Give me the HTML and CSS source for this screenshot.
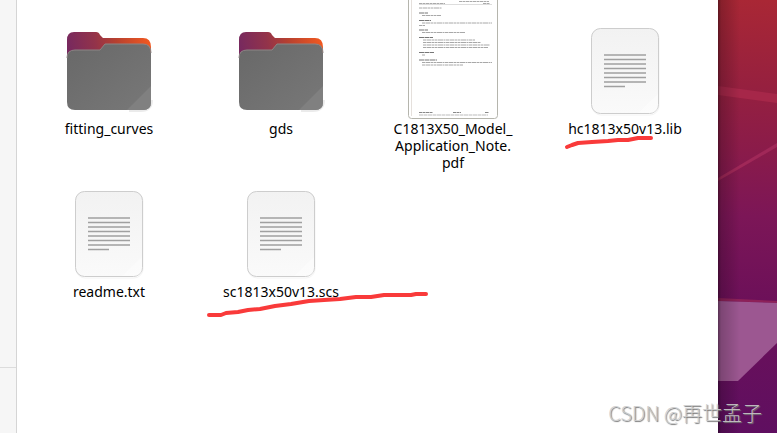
FILE: index.html
```html
<!DOCTYPE html>
<html lang="zh-CN">
<head>
    <meta charset="UTF-8">
    <meta name="viewport" content="width=device-width, initial-scale=1.0">
    <title>Files</title>
    <link rel="stylesheet" href="styles.css">
</head>
<body>
    <!-- shared icons -->
    <svg class="defs" width="0" height="0" aria-hidden="true">
        <defs>
            <linearGradient id="folderBack" gradientUnits="userSpaceOnUse" x1="6" y1="30" x2="90" y2="14">
                <stop offset="0" stop-color="#752860"/>
                <stop offset="0.35" stop-color="#93334a"/>
                <stop offset="0.6" stop-color="#b8412f"/>
                <stop offset="1" stop-color="#f45a20"/>
            </linearGradient>
            <linearGradient id="folderFront" x1="0" y1="0" x2="1" y2="1">
                <stop offset="0" stop-color="#686868"/>
                <stop offset="1" stop-color="#787878"/>
            </linearGradient>
            <linearGradient id="paper" x1="0" y1="0" x2="0" y2="1">
                <stop offset="0" stop-color="#f2f2f2"/>
                <stop offset="1" stop-color="#fafafa"/>
            </linearGradient>
            <linearGradient id="wall" gradientUnits="userSpaceOnUse" x1="35" y1="0" x2="25" y2="433">
                <stop offset="0" stop-color="#a92735"/>
                <stop offset="0.2" stop-color="#96203f"/>
                <stop offset="0.35" stop-color="#8a1b4a"/>
                <stop offset="0.5" stop-color="#7c1657"/>
                <stop offset="0.7" stop-color="#6c1059"/>
                <stop offset="1" stop-color="#5f0f60"/>
            </linearGradient>
            <symbol id="folder" viewBox="0 0 96 96">
                <path d="M68 87h12q11 0 11-11" fill="none" stroke="#000" stroke-opacity="0.08" stroke-width="2"/>
                <path d="M6 36V16q0-8 7-8h22q3 0 4 3l3 3h40q8 0 8 9v18z" fill="url(#folderBack)"/>
                <path d="M6 34q0-8 8-8h25l5-6h38q8 0 8 9v49q0 8-8 8H14q-8 0-8-8z" fill="url(#folderFront)"/>
                <path d="M6 34q0-8 8-8h25l5-6h38q8 0 8 9" fill="none" stroke="#8d8585" stroke-width="1"/>
                <path d="M90 62v16q0 8-8 8H66z" fill="#808080"/>
            </symbol>
            <symbol id="document" viewBox="0 0 96 96">
                <rect x="15" y="5" width="67" height="86" rx="9" fill="none" stroke="#f4f4f4"/>
                <rect x="14.5" y="4.5" width="67" height="85" rx="9" fill="url(#paper)" stroke="#cdcdcd"/>
                <path d="M81 70v12q0 7-8 7H61z" fill="#fff" opacity="0.4"/>
                <path d="M27 31h42M27 35.5h42M27 40h42M27 44.5h42M27 49h42M27 53.5h42M27 58h42M27 62.5h21" stroke="#a0a0a0" stroke-width="1.5"/>
            </symbol>
        </defs>
    </svg>

    <div class="desktop">
        <div class="window">
            <aside class="sidebar">
                <div class="places"></div>
            </aside>
            <main class="files">
                <div class="file">
                    <div class="thumb"><svg class="icon"><use href="#folder"/></svg></div>
                    <span class="name">fitting_curves</span>
                </div>
                <div class="file">
                    <div class="thumb"><svg class="icon"><use href="#folder"/></svg></div>
                    <span class="name">gds</span>
                </div>
                <div class="file">
                    <div class="thumb">
                        <svg class="preview" viewBox="0 0 90 126">
                            <rect x="0.5" y="0.5" width="89" height="124" rx="3" fill="#fff" stroke="#b5b5ad"/>
                            <path d="M3.5 2v120" stroke="#e5e0dc"/>
                            <path d="M11 9.5h26M75 9.5h7M51 7.5h30" stroke="#aaa" stroke-dasharray="3 0.5"/>
                            <path d="M11 10.5h73" stroke="#bbb" stroke-width="0.5"/>
                            <path d="M11 14h23M14 21.5h19M14 29h70M11 31.5h6M14 38.5h43M15 46h52M15 48.5h58M15 51h67M15 53.5h65M14 61h3M14 68.5h70M14 71h41" stroke="#a8a8a8" stroke-dasharray="3 0.5 5 0.5 2 0.5"/>
                            <path d="M11 19h9M11 26.5h12M11 36h9M11 43.5h14M11 58.5h15M11 66h18" stroke="#777" stroke-dasharray="5 0.5"/>
                            <path d="M11 118.5h14M45 118.5h8M77 118.5h4" stroke="#888" stroke-dasharray="3 0.5"/>
                            <path d="M11 121h69" stroke="#bbb" stroke-dasharray="4 0.5"/>
                        </svg>
                    </div>
                    <span class="name">C1813X50_Model_<wbr>Application_Note.<wbr>pdf</span>
                </div>
                <div class="file">
                    <div class="thumb"><svg class="icon"><use href="#document"/></svg></div>
                    <span class="name">hc1813x50v13.lib</span>
                    <svg class="mark mark-lib" viewBox="0 0 90 14">
                        <path d="M3 11L8 9L14 7L28 6L44 5L54 4L64 4L74 2L87 2"/>
                    </svg>
                </div>
                <div class="file">
                    <div class="thumb"><svg class="icon"><use href="#document"/></svg></div>
                    <span class="name">readme.txt</span>
                </div>
                <div class="file">
                    <div class="thumb"><svg class="icon"><use href="#document"/></svg></div>
                    <span class="name">sc1813x50v13.scs</span>
                    <svg class="mark mark-scs" viewBox="0 0 222 28">
                        <path d="M3 24H15L20 22L32 21L42 19L54 18L69 15L85 13L103 10L118 9L134 8L150 6L165 6L178 4L205 4L210 3H220"/>
                    </svg>
                </div>
            </main>
        </div>
        <div class="wallpaper">
            <svg viewBox="0 0 59 433" preserveAspectRatio="none">
                <rect width="59" height="433" fill="url(#wall)"/>
                <path d="M0 86L59 94V103L0 95z" fill="#a62749"/>
                <path d="M0 178L59 143V147L0 181z" fill="#a02858"/>
                <path d="M0 298L59 301V303L0 301z" fill="#8d2159"/>
                <path d="M0 301L59 303V343L20 381H0z" fill="#9c5791"/>
            </svg>
        </div>
        <div class="watermark">CSDN @再世孟子</div>
    </div>
</body>
</html>
```
FILE: styles.css
```css
* {
    box-sizing: border-box;
}

body {
    margin: 0;
    font-family: "Noto Sans", "Noto Sans CJK SC", sans-serif;
    color: #000;
}

.defs {
    position: absolute;
}

.desktop {
    position: relative;
    display: flex;
    height: 100vh;
    overflow: hidden;
}

.window {
    flex: 1;
    display: flex;
    background: #fff;
}

.sidebar {
    width: 17px;
    background: #f6f6f6;
    border-right: 1px solid #d5d5d5;
}

.places {
    height: 85vh;
    border-bottom: 1px solid #dcdcdc;
}

.files {
    flex: 1;
    display: grid;
    grid-template-columns: repeat(4, 1fr);
    align-content: start;
    row-gap: 16px;
    padding: 24px 7px 0 6px;
}

.file {
    position: relative;
    display: flex;
    flex-direction: column;
    align-items: center;
}

.thumb {
    display: flex;
    align-items: flex-end;
    height: 96px;
}

.icon {
    width: 96px;
    height: 96px;
}

.preview {
    width: 90px;
    height: 126px;
    flex-shrink: 0;
}

.name {
    font-size: 14px;
    line-height: 17px;
    max-width: 132px;
    text-align: center;
}

/* red pen strokes */
.mark {
    position: absolute;
    fill: none;
    stroke: #f93a3a;
    stroke-width: 4;
    stroke-linecap: round;
    stroke-linejoin: round;
}

.mark-lib {
    left: 25px;
    top: 112px;
    width: 90px;
    height: 14px;
}

.mark-scs {
    left: 11px;
    top: 104px;
    width: 222px;
    height: 28px;
}

.wallpaper {
    position: relative;
    width: 59px;
    background: #7a1655;
}

.wallpaper svg {
    display: block;
    width: 100%;
    height: 100%;
}

/* window shadow */
.wallpaper::after {
    content: "";
    position: absolute;
    inset: 0;
    background: linear-gradient(to right, rgba(0, 0, 0, 0.45) 0, rgba(0, 0, 0, 0.2) 3px, rgba(0, 0, 0, 0) 22px);
}

.watermark {
    position: absolute;
    right: 15px;
    bottom: 6px;
    font-family: "Noto Sans CJK SC", sans-serif;
    font-size: 20px;
    line-height: 28px;
    font-weight: 300;
    color: rgba(205, 205, 205, 0.9);
    text-shadow: 1px 1px 1px #777;
}
```
